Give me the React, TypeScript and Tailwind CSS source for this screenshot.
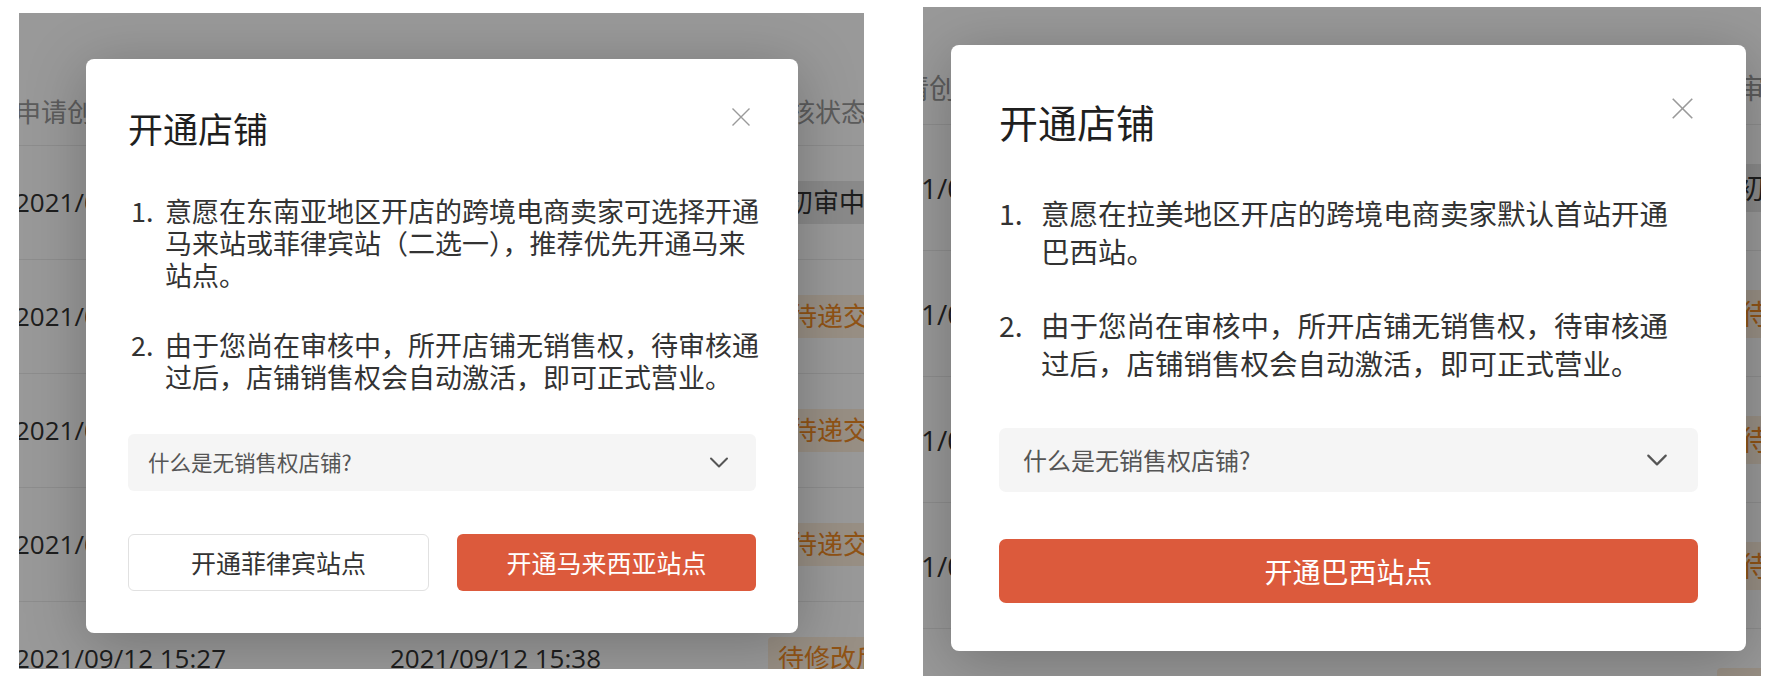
import React from 'react';

type Tone = 'gray' | 'orange';

interface RecordRow {
  created: string;
  updated: string;
  status: string;
  tone: Tone;
}

const records: RecordRow[] = [
  { created: '2021/09/12 15:27', updated: '2021/09/12 15:38', status: '初审中›', tone: 'gray' },
  { created: '2021/09/12 15:27', updated: '2021/09/12 15:38', status: '待递交', tone: 'orange' },
  { created: '2021/09/12 15:27', updated: '2021/09/12 15:38', status: '待递交', tone: 'orange' },
  { created: '2021/09/12 15:27', updated: '2021/09/12 15:38', status: '待递交', tone: 'orange' },
  { created: '2021/09/12 15:27', updated: '2021/09/12 15:38', status: '待修改后', tone: 'orange' },
];

interface TableLook {
  text: string;
  head: string;
  headStatus: string;
  row: string;
  col1: string;
  col2: string;
  col3: string;
  tag: string;
}

const seaLook: TableLook = {
  text: 'text-[26px]',
  head: 'h-[133px] pt-[67px]',
  headStatus: 'pr-[30px]',
  row: 'h-[114px]',
  col1: 'ml-[-4px] w-[375px]',
  col2: 'w-[360px]',
  col3: 'w-[160px]',
  tag: 'h-[43px] px-[10px]',
};

const latamLook: TableLook = {
  text: 'text-[28px]',
  head: 'h-[118px] pt-[44px]',
  headStatus: 'pl-[20px]',
  row: 'h-[126px]',
  col1: 'ml-[-50px] w-[420px]',
  col2: 'w-[410px]',
  col3: 'w-[160px]',
  tag: 'h-[48px] px-[10px]',
};

// the store list that sits behind the dialog mask
function RecordTable({ look }: { look: TableLook }) {
  return (
    <div className={`font-['Open_Sans','Noto_Sans_CJK_SC',sans-serif] ${look.text} text-[#333] whitespace-nowrap`}>
      <div className={`flex items-center border-b border-[#ececec] text-[#999] ${look.head}`}>
        <div className={`shrink-0 ${look.col1}`}>申请创建时间</div>
        <div className={`shrink-0 ${look.col2}`}>最近更新时间</div>
        <div className={`shrink-0 text-center ${look.col3} ${look.headStatus}`}>审核状态</div>
      </div>
      {records.map((r, i) => (
        <div key={i} className={`flex items-center border-b border-[#ececec] ${look.row}`}>
          <div className={`shrink-0 ${look.col1}`}>{r.created}</div>
          <div className={`shrink-0 ${look.col2}`}>{r.updated}</div>
          <div className={`shrink-0 flex justify-center ${look.col3}`}>
            <span
              className={`inline-flex items-center rounded-[4px] ${look.tag} ${
                r.tone === 'gray' ? 'bg-[#e6e6e6] text-[#333]' : 'bg-[#fdeedd] text-[#f08a24]'
              }`}
            >
              {r.status}
            </span>
          </div>
        </div>
      ))}
    </div>
  );
}

function CloseIcon({ className }: { className: string }) {
  return (
    <svg viewBox="0 0 20 20" className={className} fill="none" stroke="#9a9a9a" strokeWidth="1.4">
      <path d="M1.5 1.5L18.5 18.5M18.5 1.5L1.5 18.5" />
    </svg>
  );
}

function Chevron({ className }: { className: string }) {
  return (
    <svg viewBox="0 0 20 11" className={className} fill="none" stroke="#555" strokeWidth="2" strokeLinecap="round" strokeLinejoin="round">
      <path d="M2 1.5L10 9.5L18 1.5" />
    </svg>
  );
}

const cjk = "font-['Noto_Sans_CJK_SC','Noto_Sans',sans-serif]";

function SeaDialog() {
  return (
    <div className={`absolute left-[67px] top-[46px] w-[712px] h-[574px] rounded-[8px] bg-white px-[42px] pt-[45px] shadow-[0_10px_60px_rgba(0,0,0,0.25)] ${cjk}`}>
      <CloseIcon className="absolute top-[48px] right-[47px] w-[20px] h-[20px]" />
      <h2 className="text-[35px] leading-[48px] text-[#1f1f1f]">开通店铺</h2>

      <ol className="mt-[43px] w-[636px] text-[27px] leading-[32px] text-[#333] space-y-[38px]">
        <li className="flex">
          <span className="w-[37px] shrink-0 pl-[3px]">1.</span>
          <span className="flex-1">意愿在东南亚地区开店的跨境电商卖家可选择开通马来站或菲律宾站（二选一），推荐优先开通马来站点。</span>
        </li>
        <li className="flex">
          <span className="w-[37px] shrink-0 pl-[3px]">2.</span>
          <span className="flex-1">由于您尚在审核中，所开店铺无销售权，待审核通过后，店铺销售权会自动激活，即可正式营业。</span>
        </li>
      </ol>

      <div className="mt-[41px] h-[57px] rounded-[6px] bg-[#f5f5f5] flex items-center justify-between pl-[20px] pr-[27px]">
        <span className="text-[21.5px] text-[#555]">什么是无销售权店铺?</span>
        <Chevron className="w-[20px] h-[11px]" />
      </div>

      <div className="mt-[43px] flex gap-[28px]">
        <button className="flex-1 h-[57px] rounded-[6px] border border-[#e1e1e1] bg-white text-[25px] text-[#333]">
          开通菲律宾站点
        </button>
        <button className="flex-1 h-[57px] rounded-[6px] bg-[#dc5a3c] text-[25px] text-white">
          开通马来西亚站点
        </button>
      </div>
    </div>
  );
}

function LatamDialog() {
  return (
    <div className={`absolute left-[28px] top-[38px] w-[795px] h-[606px] rounded-[8px] bg-white px-[48px] pt-[50px] shadow-[0_10px_60px_rgba(0,0,0,0.25)] ${cjk}`}>
      <CloseIcon className="absolute top-[52px] right-[52px] w-[23px] h-[23px]" />
      <h2 className="text-[39px] leading-[52px] text-[#1f1f1f]">开通店铺</h2>

      <ol className="mt-[47px] w-[682px] text-[28.5px] leading-[38px] text-[#333] space-y-[36px]">
        <li className="flex">
          <span className="w-[42px] shrink-0">1.</span>
          <span className="flex-1">意愿在拉美地区开店的跨境电商卖家默认首站开通巴西站。</span>
        </li>
        <li className="flex">
          <span className="w-[42px] shrink-0">2.</span>
          <span className="flex-1">由于您尚在审核中，所开店铺无销售权，待审核通过后，店铺销售权会自动激活，即可正式营业。</span>
        </li>
      </ol>

      <div className="mt-[46px] h-[64px] rounded-[7px] bg-[#f5f5f5] flex items-center justify-between pl-[24px] pr-[30px]">
        <span className="text-[24px] text-[#555]">什么是无销售权店铺?</span>
        <Chevron className="w-[22px] h-[12px]" />
      </div>

      <button className="mt-[47px] w-full h-[64px] rounded-[7px] bg-[#dc5a3c] text-[28px] text-white">
        开通巴西站点
      </button>
    </div>
  );
}

export default function App() {
  return (
    <div className="w-[1788px] h-[698px] bg-white flex items-start overflow-hidden">
      <div className="relative ml-[19px] mt-[13px] w-[845px] h-[656px] shrink-0 overflow-hidden bg-white">
        <RecordTable look={seaLook} />
        <div className="absolute inset-0 bg-black/40" />
        <SeaDialog />
      </div>

      <div className="relative ml-[59px] mt-[7px] w-[838px] h-[669px] shrink-0 overflow-hidden bg-white">
        <RecordTable look={latamLook} />
        <div className="absolute inset-0 bg-black/40" />
        <LatamDialog />
      </div>
    </div>
  );
}
